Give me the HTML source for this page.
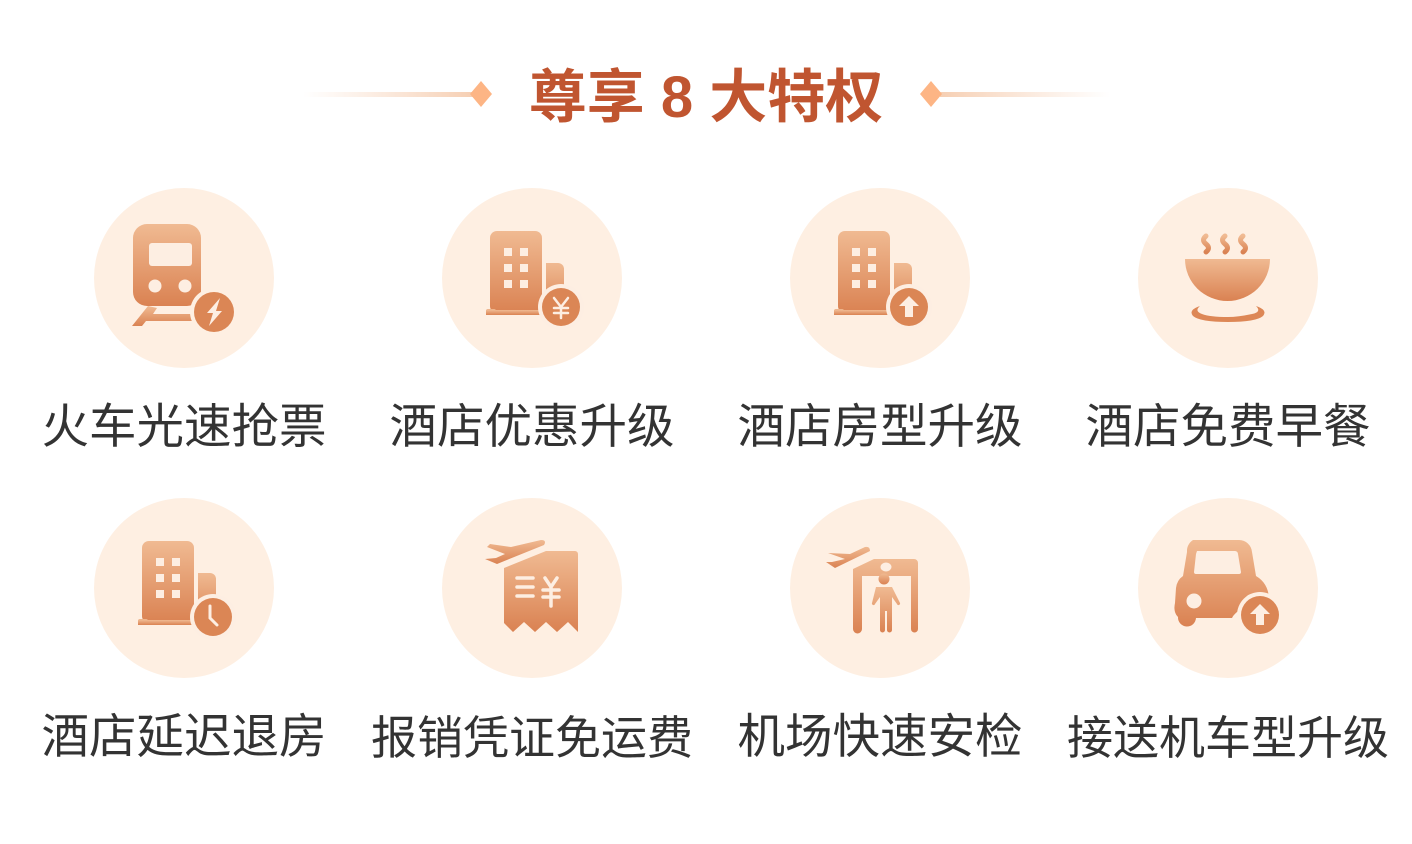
<!DOCTYPE html>
<html><head><meta charset="utf-8"><style>
body{margin:0;width:1412px;height:844px;background:#fff;position:relative;overflow:hidden;font-family:"Liberation Sans","Noto Sans CJK SC",sans-serif}
.t{position:absolute;left:0;width:1412px;top:60px;text-align:center;font-size:58px;font-weight:bold;color:#c05530;line-height:76px;white-space:pre}
.item{position:absolute;width:348px;text-align:center}
.item svg{display:block;margin:0 auto}
.lb{font-size:47.5px;color:#333;margin-top:30px;line-height:60px;white-space:nowrap}
.lb7{font-size:46px}
</style></head><body>
<svg style="position:absolute;left:0;top:0" width="1412" height="140">
<defs><linearGradient id="l1" x1="0" x2="1"><stop offset="0" stop-color="#f7d6bf" stop-opacity="0"/><stop offset="1" stop-color="#f6cfb3"/></linearGradient>
<linearGradient id="l2" x1="1" x2="0"><stop offset="0" stop-color="#f7d6bf" stop-opacity="0"/><stop offset="1" stop-color="#f6cfb3"/></linearGradient></defs>
<rect x="303" y="92" width="170" height="5" fill="url(#l1)"/>
<rect x="940" y="92" width="170" height="5" fill="url(#l2)"/>
<path d="M481 81 L492 94 L481 107 L470 94Z" fill="#fdb585"/>
<path d="M931 81 L942 94 L931 107 L920 94Z" fill="#fdb585"/>
</svg>
<div class="t">尊享 8 大特权</div>
<svg width="0" height="0" style="position:absolute"><defs>
<linearGradient id="g" x1="0" y1="0" x2="0" y2="1"><stop offset="0" stop-color="#f0ba92"/><stop offset="1" stop-color="#da8252"/></linearGradient>
<g id="bld"><rect x="48" y="43" width="52" height="82" rx="7" fill="url(#g)"/><rect x="44" y="121" width="10" height="6" rx="2" fill="url(#g)"/><rect x="44" y="122" width="74" height="5" fill="url(#g)"/><path d="M104 75h12a6 6 0 0 1 6 6v44h-18z" fill="url(#g)"/>
<g fill="#fdeee2"><rect x="62" y="60" width="8" height="8"/><rect x="78" y="60" width="8" height="8"/><rect x="62" y="76" width="8" height="8"/><rect x="78" y="76" width="8" height="8"/><rect x="62" y="92" width="8" height="8"/><rect x="78" y="92" width="8" height="8"/></g>
<circle cx="119" cy="119" r="23" fill="#fdeee2"/><circle cx="119" cy="119" r="19" fill="#db8655"/></g>
<g id="up"><path d="M0 -11 L10 -1 H4 V10 H-4 V-1 H-10Z" fill="#fdeee2"/></g>
</defs></svg>

<div class="item" style="left:10px;top:188px">
<svg width="180" height="180"><circle cx="90" cy="90" r="90" fill="#feefe2"/>
<rect x="39" y="36" width="68" height="82" rx="14" fill="url(#g)"/>
<rect x="55" y="55" width="43" height="23" rx="3" fill="#fdeee2"/>
<circle cx="61" cy="98" r="6.5" fill="#fdeee2"/><circle cx="91" cy="98" r="6.5" fill="#fdeee2"/>
<path d="M54 118 L38 138 H48 L52 133 H100 V126 H59 L63 120Z" fill="url(#g)"/>
<circle cx="120" cy="124" r="24" fill="#feefe2"/><circle cx="120" cy="124" r="20" fill="#db8655"/>
<path d="M126 110 L113 125 H119 L115 138 L128 123 H122Z" fill="#fdeee2"/></svg>
<div class="lb">火车光速抢票</div></div>

<div class="item" style="left:358px;top:188px">
<svg width="180" height="180"><circle cx="90" cy="90" r="90" fill="#feefe2"/><use href="#bld"/>
<path d="M112 110 L119 119 L126 110 M119 119 V130 M112 120 H126 M112 125 H126" stroke="#fdeee2" stroke-width="2.5" fill="none" stroke-linecap="round"/></svg>
<div class="lb">酒店优惠升级</div></div>

<div class="item" style="left:706px;top:188px">
<svg width="180" height="180"><circle cx="90" cy="90" r="90" fill="#feefe2"/><use href="#bld"/><use href="#up" x="119" y="119"/></svg>
<div class="lb">酒店房型升级</div></div>

<div class="item" style="left:1054px;top:188px">
<svg width="180" height="180"><circle cx="90" cy="90" r="90" fill="#feefe2"/>
<g stroke="url(#g)" stroke-width="5" fill="none" stroke-linecap="round"><path d="M68 48 q-5 4 0 8 q5 4 0 8"/><path d="M87 48 q-5 4 0 8 q5 4 0 8"/><path d="M105 48 q-5 4 0 8 q5 4 0 8"/></g>
<path d="M47 71 H132 A42.5 42 0 0 1 47 71Z" fill="url(#g)"/>
<path d="M62 118 Q50 122 55 128 Q62 134 90 134 Q118 134 125 128 Q130 122 118 118 Q124 124 114 126 Q100 129 90 129 Q72 129 64 126 Q56 123 62 118Z" fill="#dd8756"/>
</svg>
<div class="lb">酒店免费早餐</div></div>

<div class="item" style="left:10px;top:498px">
<svg width="180" height="180"><circle cx="90" cy="90" r="90" fill="#feefe2"/><use href="#bld"/>
<path d="M116 108 V120 L123 127" stroke="#fdeee2" stroke-width="3" fill="none" stroke-linecap="round"/></svg>
<div class="lb">酒店延迟退房</div></div>

<div class="item" style="left:358px;top:498px">
<svg width="180" height="180"><circle cx="90" cy="90" r="90" fill="#feefe2"/>
<path d="M62 70 L104 53 H133 A3 3 0 0 1 136 56 V134 L126 124 L115 134 L104 124 L93 134 L82 124 L71 134 L62 125Z" fill="url(#g)"/>
<path d="M48 46 L69 49 L99 42 Q105 42 102 47 L55 66 L43 61 L54 60 L63 56 L45 49Z" fill="url(#g)"/>
<g stroke="#fdeee2" stroke-width="3.5" stroke-linecap="round" fill="none"><path d="M75 80 H91 M75 89 H91 M75 98 H91"/><path d="M103 80 L109 89 L115 80 M109 89 V108 M101 92 H117 M101 99 H117"/></g></svg>
<div class="lb lb7">报销凭证免运费</div></div>

<div class="item" style="left:706px;top:498px">
<svg width="180" height="180"><circle cx="90" cy="90" r="90" fill="#feefe2"/>
<path d="M38 55 L60 56 L75 49 Q80 48 80 53 L45 70 L36 64 L42 64 L55 61Z" fill="url(#g)"/>
<path d="M63 71 L84 61 H124 A4 4 0 0 1 128 65 V131 A3.5 3.5 0 0 1 121 131 V78 H72 V131 A4.5 4.5 0 0 1 63 131Z" fill="url(#g)"/>
<ellipse cx="96" cy="69" rx="5.5" ry="4.5" fill="#fdeee2"/>
<circle cx="94" cy="81" r="5.5" fill="url(#g)"/>
<path d="M86 89 H102 L110 105 A1.5 1.5 0 0 1 107 106 L102 99 V132 A2.5 2.5 0 0 1 97 132 V113 H95 V132 A2.5 2.5 0 0 1 90 132 V99 L85 106 A1.5 1.5 0 0 1 82 105Z" fill="url(#g)"/></svg>
<div class="lb">机场快速安检</div></div>

<div class="item" style="left:1054px;top:498px">
<svg width="180" height="180"><circle cx="90" cy="90" r="90" fill="#feefe2"/>
<path d="M55 42 H101 A13 13 0 0 1 114 54 L118 78 Q130 85 131 100 L131 106 H110 L110 106 Q96 115 94 120 H58 A9 9 0 0 1 40 119 Q35 114 37 105 L38 90 Q39 82 45 78 L49 54 A13 13 0 0 1 55 42Z" fill="url(#g)"/>
<path d="M59 53 H97 A3 3 0 0 1 100 56 L103 74 A2 2 0 0 1 101 76 H58 A2 2 0 0 1 56 74 L58 56 Z" fill="#fdeee2"/>
<circle cx="56" cy="103" r="7.5" fill="#fdeee2"/><circle cx="114" cy="103" r="7" fill="#fdeee2"/>
<circle cx="122" cy="117" r="23" fill="#feefe2"/><circle cx="122" cy="117" r="19" fill="#db8655"/><use href="#up" x="122" y="117"/></svg>
<div class="lb lb7">接送机车型升级</div></div>
</body></html>
